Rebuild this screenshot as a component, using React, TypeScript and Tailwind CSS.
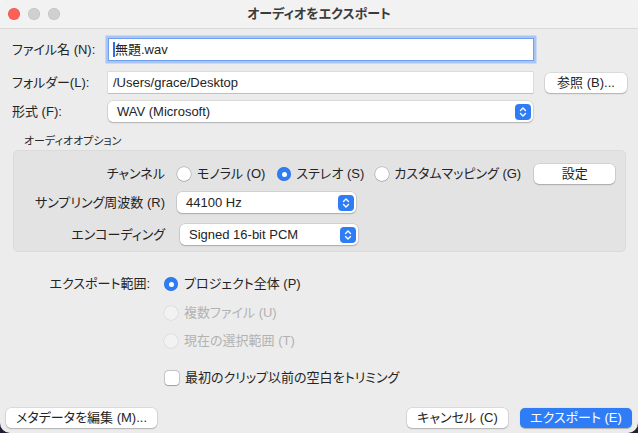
import React from "react";

function Radio({ checked = false, disabled = false }: { checked?: boolean; disabled?: boolean }) {
  if (checked) {
    return (
      <span className="w-[14px] h-[14px] shrink-0 rounded-full bg-[#2e7cf6] flex items-center justify-center shadow-[inset_0_0_0_0.5px_rgba(0,0,0,0.15)]">
        <span className="block w-[5px] h-[5px] rounded-full bg-white" />
      </span>
    );
  }
  if (disabled) {
    return <span className="block w-[14px] h-[14px] shrink-0 rounded-full bg-[#f2f2f2] shadow-[0_0_0_0.5px_rgba(0,0,0,0.12)]" />;
  }
  return (
    <span className="block w-[14px] h-[14px] shrink-0 rounded-full bg-white shadow-[0_0_0_0.5px_rgba(0,0,0,0.28),0_0.5px_1px_rgba(0,0,0,0.2)]" />
  );
}

function Arrow() {
  return (
    <span className="w-[16px] h-[16px] shrink-0 rounded-[4px] bg-[#2e7cf6] flex items-center justify-center">
      <svg width="10" height="12" viewBox="0 0 10 12" fill="none">
        <path d="M2.5 4.5 L5 2 L7.5 4.5" stroke="white" strokeWidth="1.4" strokeLinecap="round" strokeLinejoin="round" />
        <path d="M2.5 7.5 L5 10 L7.5 7.5" stroke="white" strokeWidth="1.4" strokeLinecap="round" strokeLinejoin="round" />
      </svg>
    </span>
  );
}

function Select({ text, w }: { text: string; w: string }) {
  return (
    <div
      className={`${w} h-[21px] shrink-0 bg-white rounded-[5px] flex items-center justify-between pl-[9px] pr-[2px] shadow-[0_0_0_0.5px_rgba(0,0,0,0.16),0_1px_1.5px_rgba(0,0,0,0.18)]`}
    >
      <span>{text}</span>
      <Arrow />
    </div>
  );
}

function Button({ text, w, primary = false }: { text: string; w: string; primary?: boolean }) {
  if (primary) {
    return (
      <div
        className={`${w} h-[20px] shrink-0 rounded-[5px] bg-[#2f7df6] text-white flex items-center justify-center shadow-[0_0.5px_1px_rgba(0,0,0,0.25)]`}
      >
        {text}
      </div>
    );
  }
  return (
    <div
      className={`${w} h-[20px] shrink-0 rounded-[5px] bg-white flex items-center justify-center shadow-[0_0_0_0.5px_rgba(0,0,0,0.14),0_1px_1.5px_rgba(0,0,0,0.2)]`}
    >
      {text}
    </div>
  );
}

export default function App() {
  return (
    <div className="w-[638px] h-[433px] bg-[linear-gradient(to_bottom,#f3f3f3_0%,#f3f3f3_50%,#1c2232_50%,#1c2232_100%)] font-['Liberation_Sans','Noto_Sans_CJK_JP',sans-serif] [font-feature-settings:'palt'] text-[13px] leading-[16px] text-[#242424]">
      <div className="w-full h-full rounded-[10px] overflow-hidden bg-[#ececec] flex flex-col">
        {/* Title bar */}
        <div className="h-[29px] shrink-0 bg-[#f2f2f2] border-b border-[#d9d9d9] relative flex items-center justify-center">
          <div className="absolute left-[8px] top-[8px] flex gap-[8px]">
            <span className="w-[12px] h-[12px] rounded-full bg-[#fe5f57] shadow-[inset_0_0_0_0.5px_rgba(0,0,0,0.15)]" />
            <span className="w-[12px] h-[12px] rounded-full bg-[#d0d0d0] shadow-[inset_0_0_0_0.5px_rgba(0,0,0,0.1)]" />
            <span className="w-[12px] h-[12px] rounded-full bg-[#d0d0d0] shadow-[inset_0_0_0_0.5px_rgba(0,0,0,0.1)]" />
          </div>
          <span className="font-bold text-[#3b3b3b]">オーディオをエクスポート</span>
        </div>

        {/* Body */}
        <div className="flex-1 flex flex-col pl-[12px] pr-[11px]">
          {/* File name */}
          <div className="flex items-center mt-[9px] h-[23px]">
            <div className="w-[96px] shrink-0">ファイル名 (N):</div>
            <div className="w-[424px] ml-[1px] h-[21px] bg-white flex items-center pl-[4px] shadow-[0_0_0_1px_#6f9fee,0_0_0_3.5px_#a9c5f3]">
              <span className="w-[2px] h-[15px] bg-[#2f6fe0]" />
              <span>無題.wav</span>
            </div>
          </div>

          {/* Folder */}
          <div className="flex items-center mt-[11px] h-[21px]">
            <div className="w-[96px] shrink-0">フォルダー(L):</div>
            <div className="w-[425px] shrink-0 h-[21px] bg-white flex items-center pl-[5px] shadow-[0_0_0_0.5px_rgba(0,0,0,0.14),0_1px_0_rgba(0,0,0,0.12)]">
              /Users/grace/Desktop
            </div>
            <div className="ml-[12px]">
              <Button text="参照 (B)..." w="w-[82px]" />
            </div>
          </div>

          {/* Format */}
          <div className="flex items-center mt-[8px] h-[21px]">
            <div className="w-[96px] shrink-0">形式 (F):</div>
            <Select text="WAV (Microsoft)" w="w-[425px]" />
          </div>

          {/* Audio options */}
          <div className="mt-[12px] ml-[12px] text-[11px] leading-[14px] text-[#2a2a2a]">オーディオオプション</div>
          <div className="mt-[2px] ml-[1px] mr-[1px] h-[102px] rounded-[5px] bg-[#e3e3e3] border border-[#dadada] flex flex-col pt-[13px]">
            <div className="flex items-center h-[20px]">
              <div className="w-[151px] shrink-0 text-right">チャンネル</div>
              <div className="ml-[12px] flex items-center">
                <Radio />
                <span className="ml-[6px] shrink-0">モノラル (O)</span>
                <span className="ml-[12px] shrink-0"><Radio checked /></span>
                <span className="ml-[5px] shrink-0">ステレオ (S)</span>
                <span className="ml-[11px] shrink-0"><Radio /></span>
                <span className="ml-[5px] shrink-0">カスタムマッピング (G)</span>
                <span className="ml-[13px] shrink-0"><Button text="設定" w="w-[81px]" /></span>
              </div>
            </div>
            <div className="flex items-center h-[21px] mt-[8px]">
              <div className="w-[151px] shrink-0 text-right">サンプリング周波数 (R)</div>
              <div className="ml-[12px]">
                <Select text="44100 Hz" w="w-[179px]" />
              </div>
            </div>
            <div className="flex items-center h-[21px] mt-[11px]">
              <div className="w-[151px] shrink-0 text-right">エンコーディング</div>
              <div className="ml-[15px]">
                <Select text="Signed 16-bit PCM" w="w-[178px]" />
              </div>
            </div>
          </div>

          {/* Export range */}
          <div className="flex mt-[22px]">
            <div className="w-[138px] shrink-0 text-right h-[20px] flex items-center justify-end">エクスポート範囲:</div>
            <div className="ml-[14px] flex flex-col gap-[8.5px]">
              <div className="flex items-center h-[20px]">
                <Radio checked />
                <span className="ml-[6px]">プロジェクト全体 (P)</span>
              </div>
              <div className="flex items-center h-[20px] text-[#b2b2b2]">
                <Radio disabled />
                <span className="ml-[6px]">複数ファイル (U)</span>
              </div>
              <div className="flex items-center h-[20px] text-[#b2b2b2]">
                <Radio disabled />
                <span className="ml-[6px]">現在の選択範囲 (T)</span>
              </div>
            </div>
          </div>

          <div className="flex items-center h-[20px] mt-[17px] ml-[153px]">
            <span className="w-[14px] h-[14px] shrink-0 rounded-[3px] bg-white shadow-[0_0_0_0.5px_rgba(0,0,0,0.3),0_0.5px_1px_rgba(0,0,0,0.2)]" />
            <span className="ml-[6px]">最初のクリップ以前の空白をトリミング</span>
          </div>
        </div>

        {/* Footer */}
        <div className="flex items-center px-[6px] pb-[5px] h-[25px] shrink-0">
          <Button text="メタデータを編集 (M)..." w="w-[151px]" />
          <div className="ml-auto flex gap-[12px]">
            <Button text="キャンセル (C)" w="w-[101px]" />
            <Button text="エクスポート (E)" w="w-[112px]" primary />
          </div>
        </div>
      </div>
    </div>
  );
}
